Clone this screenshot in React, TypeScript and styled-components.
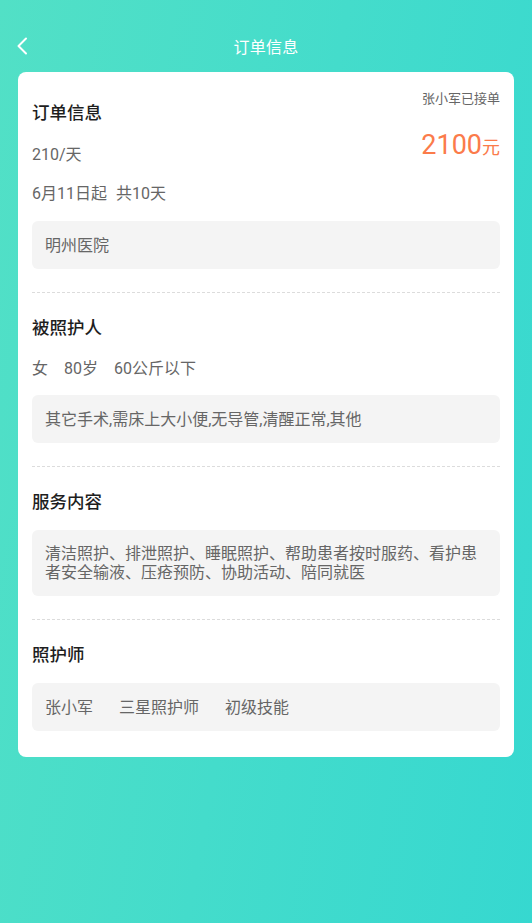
import styled, { createGlobalStyle } from 'styled-components'

const GlobalStyle = createGlobalStyle`
  * { box-sizing: border-box; }
  body {
    margin: 0;
    font-family: Roboto, "Noto Sans CJK SC", sans-serif;
    background: linear-gradient(100deg, #52e0c6 0%, #36d8d0 100%);
    min-height: 923px;
  }
`

const Page = styled.div`
  min-height: 923px;
  padding-bottom: 40px;
`

const Header = styled.div`
  display: grid;
  grid-template-columns: 1fr auto 1fr;
  align-items: center;
  height: 52px;
  margin-top: 20px;
  padding: 0 16px;
  color: #fff;
`

const BackButton = styled.button`
  justify-self: start;
  display: flex;
  align-items: center;
  background: none;
  border: none;
  padding: 0;
  cursor: pointer;
`

const HeaderTitle = styled.h1`
  margin: 0;
  font-size: 16px;
  font-weight: 400;
  letter-spacing: 0.3px;
`

const Card = styled.div`
  margin: 0 18px;
  background: #fff;
  border-radius: 8px;
  padding: 18px 14px 26px;
`

const TopRow = styled.div`
  display: flex;
  justify-content: space-between;
  align-items: flex-start;
`

const Column = styled.div<{ $align?: string }>`
  display: flex;
  flex-direction: column;
  align-items: ${p => p.$align || 'flex-start'};
`

const SectionTitle = styled.h2<{ $top?: number }>`
  margin: ${p => p.$top ?? 0}px 0 0;
  font-size: 17.5px;
  line-height: 24px;
  font-weight: 500;
  color: #1e1e1e;
`

const InfoLine = styled.div<{ $top: number; $gap?: number }>`
  display: flex;
  gap: ${p => p.$gap ?? 8}px;
  margin-top: ${p => p.$top}px;
  font-size: 16px;
  line-height: 22px;
  color: #666;
`

const Accepted = styled.div`
  font-size: 13px;
  line-height: 18px;
  color: #666;
`

const Price = styled.div`
  margin-top: 21px;
  color: #fb7b4a;
  font-size: 27px;
  line-height: 32px;
  white-space: nowrap;
`

const Unit = styled.span`
  font-size: 18px;
`

const GrayBox = styled.div<{ $top: number; $gap?: number }>`
  display: flex;
  gap: ${p => p.$gap ?? 0}px;
  margin-top: ${p => p.$top}px;
  padding: 14px 13px;
  min-height: 48px;
  background: #f4f4f4;
  border-radius: 6px;
  font-size: 16px;
  line-height: 19px;
  color: #666;
  align-items: center;
`

const Divider = styled.hr`
  margin: 23px 0 0;
  border: none;
  border-top: 1px dashed #dcdcdc;
`

function BackIcon () {
  return (
    <svg width="12" height="18" viewBox="0 0 12 18" fill="none">
      <path d="M10 1.5 L2.5 9 L10 16.5" stroke="#fff" strokeWidth="2" strokeLinecap="round" strokeLinejoin="round" />
    </svg>
  )
}

export default function App () {
  return (
    <Page>
      <GlobalStyle />
      <Header>
        <BackButton aria-label="返回"><BackIcon /></BackButton>
        <HeaderTitle>订单信息</HeaderTitle>
        <span />
      </Header>

      <Card>
        <TopRow>
          <Column>
            <SectionTitle $top={11}>订单信息</SectionTitle>
            <InfoLine $top={19}>210/天</InfoLine>
            <InfoLine $top={17} $gap={9}><span>6月11日起</span><span>共10天</span></InfoLine>
          </Column>
          <Column $align="flex-end">
            <Accepted>张小军已接单</Accepted>
            <Price>2100<Unit>元</Unit></Price>
          </Column>
        </TopRow>
        <GrayBox $top={16}>明州医院</GrayBox>

        <Divider />
        <SectionTitle $top={23}>被照护人</SectionTitle>
        <InfoLine $top={18} $gap={16}><span>女</span><span>80岁</span><span>60公斤以下</span></InfoLine>
        <GrayBox $top={15}>其它手术,需床上大小便,无导管,清醒正常,其他</GrayBox>

        <Divider />
        <SectionTitle $top={23}>服务内容</SectionTitle>
        <GrayBox $top={16}>清洁照护、排泄照护、睡眠照护、帮助患者按时服药、看护患者安全输液、压疮预防、协助活动、陪同就医</GrayBox>

        <Divider />
        <SectionTitle $top={23}>照护师</SectionTitle>
        <GrayBox $top={16} $gap={26}><span>张小军</span><span>三星照护师</span><span>初级技能</span></GrayBox>
      </Card>
    </Page>
  )
}
